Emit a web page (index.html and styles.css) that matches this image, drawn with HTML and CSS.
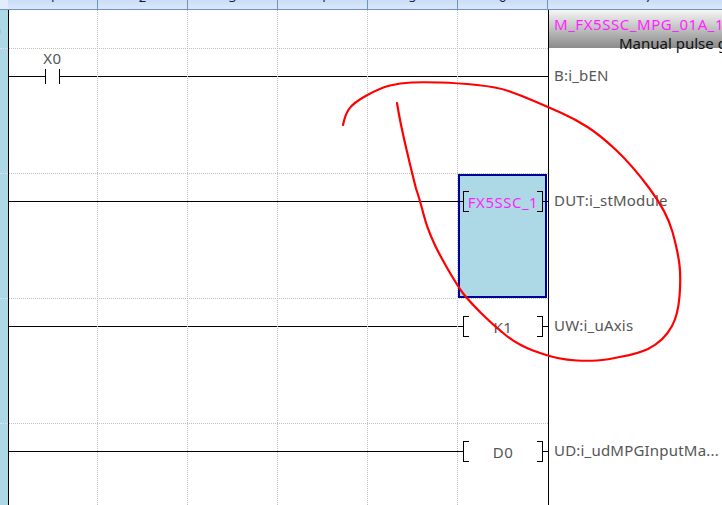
FILE: index.html
```html
<!DOCTYPE html>
<html lang="en">
<head>
<meta charset="utf-8">
<title>Ladder editor</title>
<link rel="stylesheet" href="styles.css">
</head>
<body>
<div class="page">
  <header class="ruler">
    <div class="corner"></div>
    <div class="tick"><span>1</span></div>
    <div class="tick"><span>2</span></div>
    <div class="tick"><span>3</span></div>
    <div class="tick"><span>4</span></div>
    <div class="tick"><span>5</span></div>
    <div class="tick"><span>6</span></div>
    <div class="tick last"><span>7</span></div>
  </header>
  <main class="editor">
    <aside class="rail">
      <div class="rail-top"><span class="paren">)</span></div>
      <div class="rail-seg"></div>
      <div class="rail-seg"></div>
      <div class="rail-seg"></div>
      <div class="rail-seg"></div>
    </aside>
    <section class="ladder">
      <div class="top-row"></div>
      <div class="row">
        <div class="rung">
          <div class="wire wire-lead"></div>
          <div class="contact"><span class="contact-label">X0</span></div>
          <div class="wire"></div>
        </div>
      </div>
      <div class="row">
        <div class="selection"></div>
        <div class="rung">
          <div class="wire"></div>
          <div class="operand">
            <div class="stub"></div>
            <div class="bracket open"></div>
            <div class="value magenta">FX5SSC_1</div>
            <div class="bracket close"></div>
            <div class="stub"></div>
          </div>
        </div>
      </div>
      <div class="row">
        <div class="rung">
          <div class="wire"></div>
          <div class="operand">
            <div class="stub"></div>
            <div class="bracket open"></div>
            <div class="value">K1</div>
            <div class="bracket close"></div>
            <div class="stub"></div>
          </div>
        </div>
      </div>
      <div class="row">
        <div class="rung">
          <div class="wire"></div>
          <div class="operand">
            <div class="stub"></div>
            <div class="bracket open"></div>
            <div class="value">D0</div>
            <div class="bracket close"></div>
            <div class="stub"></div>
          </div>
        </div>
      </div>
      <div class="columns">
        <div class="column"></div>
        <div class="column"></div>
        <div class="column"></div>
        <div class="column"></div>
        <div class="column"></div>
      </div>
    </section>
    <section class="block">
      <div class="block-head">
        <div class="block-title">M_FX5SSC_MPG_01A_1</div>
        <div class="block-sub">Manual pulse generator</div>
      </div>
      <div class="pin">B:i_bEN</div>
      <div class="pin">DUT:i_stModule</div>
      <div class="pin">UW:i_uAxis</div>
      <div class="pin">UD:i_udMPGInputMa...</div>
    </section>
  </main>
  <svg class="scribble" viewBox="0 0 722 505" aria-hidden="true">
    <path d="M343 125Q345 115 349 109Q353 103 366.500 95.500Q380 88 390 85.500Q400 83 411.500 82.500Q423 82 440 82.500Q457 83 477 85Q497 87 508.500 91Q520 95 534 101Q548 107 561.500 113Q575 119 587.500 127Q600 135 616 150Q632 165 649.500 188.500Q667 212 672.500 232Q678 252 679.500 265Q681 278 679.500 296.500Q678 315 672 326Q664 341 648 349Q637 354 622 356.500Q607 360 597 360.500Q587 361 577 360.500Q567 360 557.500 358Q548 356 533 350.500Q518 345 505.500 335Q493 325 481.500 313.500Q470 302 464 294.500Q458 287 446 266Q437 250 434 243Q427 228 423.500 214Q419 197 416 188.500Q413 177 406.500 149.500Q400 122 397 103"/>
  </svg>
</div>
</body>
</html>
```
FILE: styles.css
```css
* { box-sizing: border-box; }
html, body { margin: 0; padding: 0; background: #fff; }
body { font-family: "Noto Sans", "Open Sans", sans-serif; }

.page {
  position: relative;
  width: 722px;
  height: 505px;
  overflow: hidden;
  display: flex;
  flex-direction: column;
}

/* column ruler */
.ruler {
  display: grid;
  grid-template-columns: 8px repeat(6, 90px) 1fr;
  height: 10px;
  flex: none;
}
.corner { background: #e2ecfb; border-bottom: 1px solid #6a94c8; }
.tick {
  position: relative;
  overflow: hidden;
  background: linear-gradient(#c9ddf7, #dbe8fb);
  border-right: 1px solid #6a94c8;
  border-bottom: 1px solid #6a94c8;
}
.tick span {
  position: absolute;
  left: 0;
  right: 0;
  bottom: 5px;
  text-align: center;
  font-size: 13px;
  line-height: 13px;
  color: #1a1a4a;
}
.tick.last { border-right: 0; }
.tick.last span { left: 97px; right: auto; }

/* main */
.editor {
  flex: 1;
  display: flex;
  min-height: 0;
}
.rail {
  flex: none;
  width: 9px;
  background: #add8e6;
  border-right: 1px solid #000;
}
.rail-top { height: 38px; position: relative; overflow: hidden; }
.paren {
  position: absolute;
  left: -4px;
  top: 9px;
  font-size: 15px;
  line-height: 20px;
  color: #222;
}
.rail-seg { height: 125px; border-top: 1px dotted #e4e4e4; }

.ladder {
  position: relative;
  flex: none;
  width: 540px;
  border-right: 1px solid #000;
}
.top-row { height: 38px; }
.row {
  position: relative;
  height: 125px;
  border-top: 1px dotted #c0c0c0;
  padding-top: 17px;
}
.rung {
  position: relative;
  display: flex;
  align-items: center;
  height: 21px;
}
.wire { flex: 1; height: 1px; background: #000; }
.wire-lead { flex: none; width: 36px; }
.contact {
  position: relative;
  flex: none;
  width: 15px;
  height: 15px;
  border-left: 1px solid #000;
  border-right: 1px solid #000;
}
.contact-label {
  position: absolute;
  left: -5px;
  width: 23px;
  top: -21px;
  text-align: center;
  font-size: 15px;
  letter-spacing: 0.5px;
  line-height: 20px;
  color: #555;
}
.operand {
  flex: none;
  width: 90px;
  display: flex;
  align-items: center;
  height: 21px;
}
.stub { flex: none; width: 5px; height: 1px; background: #000; }
.bracket {
  flex: none;
  width: 6px;
  height: 21px;
  border-top: 1px solid #000;
  border-bottom: 1px solid #000;
}
.bracket.open { border-left: 1px solid #000; }
.bracket.close { border-right: 1px solid #000; }
.value {
  flex: 1;
  min-width: 0;
  display: flex;
  justify-content: center;
  white-space: nowrap;
  font-size: 15px;
  letter-spacing: 0.5px;
  line-height: 20px;
  color: #555;
}
.value.magenta { color: #ff1fff; }

.selection {
  position: absolute;
  left: 449px;
  top: 0;
  width: 89px;
  height: 124px;
  background: #add8e6;
  border: 2px solid #00009c;
}

.columns {
  position: absolute;
  top: 0;
  left: 0;
  bottom: 0;
  display: grid;
  grid-template-columns: 89px repeat(4, 90px);
}
.column { border-right: 1px dotted #c0c0c0; }

/* function block */
.block {
  flex: 1;
  min-width: 0;
  overflow: hidden;
}
.block-head {
  height: 38px;
  background: linear-gradient(#f6f6f6, #8a8a8a);
}
.block-title {
  padding-left: 5px;
  white-space: nowrap;
  font-size: 15px;
  letter-spacing: 0.55px;
  line-height: 20px;
  padding-top: 4px;
  height: 24px;
  color: #ff1fff;
}
.block-sub {
  padding-left: 70px;
  white-space: nowrap;
  font-size: 15px;
  line-height: 20px;
  margin-top: -1px;
  color: #111;
}
.pin {
  height: 125px;
  padding: 17px 0 0 5px;
  white-space: nowrap;
  font-size: 15px;
  letter-spacing: 0.2px;
  line-height: 20px;
  color: #555;
}

/* red pen annotation */
.scribble {
  position: absolute;
  inset: 0;
  width: 722px;
  height: 505px;
  pointer-events: none;
}
.scribble path {
  fill: none;
  stroke: #ff0000;
  stroke-width: 2.2;
  stroke-linecap: round;
  stroke-linejoin: round;
}
```
